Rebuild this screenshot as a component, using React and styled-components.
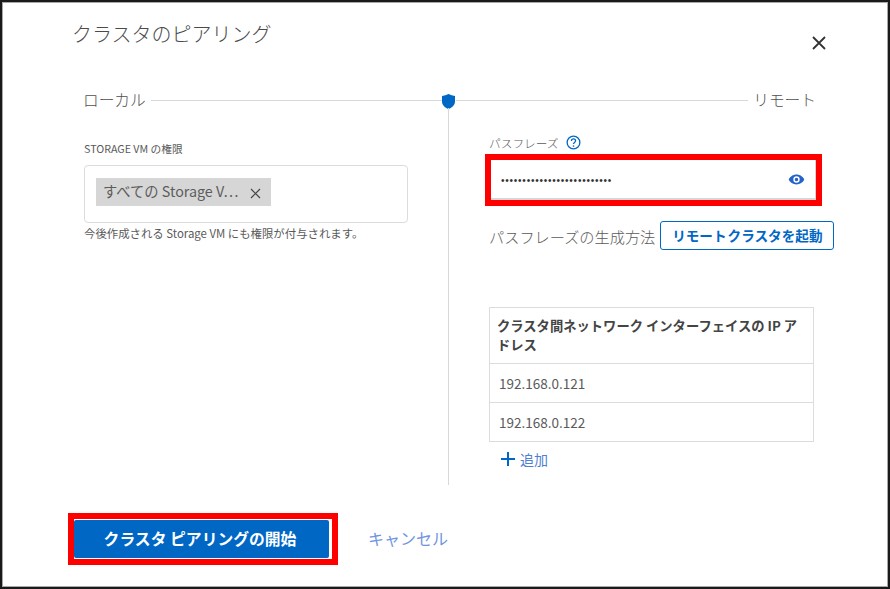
import React from 'react';
import styled, { createGlobalStyle } from 'styled-components';

const GlobalStyle = createGlobalStyle`
  html, body {
    margin: 0;
    padding: 0;
    background: #fff;
  }
  body {
    font-family: "Noto Sans CJK JP", "Noto Sans", sans-serif;
    color: #4f4f4f;
  }
`;

const Frame = styled.div`
  box-sizing: border-box;
  width: 890px;
  height: 589px;
  border: 2px solid #1a1a1a;
  box-shadow: inset 0 0 0 1px #a8a8a8;
  display: flex;
  flex-direction: column;
  background: #fff;
`;

const Header = styled.header`
  box-sizing: border-box;
  display: flex;
  justify-content: space-between;
  height: 80px;
  padding: 17px 61px 0 70px;
`;

const Title = styled.h2`
  margin: 0;
  font-size: 20px;
  line-height: 30px;
  font-weight: 300;
  color: #4a4a4a;
`;

const CloseButton = styled.button`
  margin-top: 16px;
  width: 16px;
  height: 16px;
  padding: 0;
  border: none;
  background: none;
  color: #333;
  display: flex;
`;

const Stepper = styled.div`
  display: flex;
  align-items: center;
  gap: 5px;
  height: 36px;
  padding: 0 72px 0 81px;
`;

const StepLabel = styled.span`
  font-size: 15.7px;
  line-height: 36px;
  font-weight: 300;
  color: #4f4f4f;
`;

const StepLine = styled.span`
  flex: 1;
  height: 1px;
  background: #d8d8d8;
`;

const ShieldMark = styled.svg`
  width: 13px;
  height: 15px;
  margin: 3px -4px 0 -6px;
  color: #0067c5;
`;

const Body = styled.div`
  display: grid;
  grid-template-columns: 446px 1fr;
  height: 367px;
`;

const LeftColumn = styled.section`
  padding: 23px 40px 0 82px;
`;

const RightColumn = styled.section`
  border-left: 1px solid #d8d8d8;
  margin-top: -10px;
  padding: 25px 0 0 40px;
`;

const FieldLabel = styled.div`
  font-size: 10.7px;
  line-height: 16px;
  color: #5a5a5a;
`;

const ChipBox = styled.div`
  box-sizing: border-box;
  height: 58px;
  margin-top: 8px;
  padding: 12px 11px;
  border: 1px solid #dcdcdc;
  border-radius: 4px;
`;

const Chip = styled.div`
  display: inline-flex;
  align-items: center;
  gap: 12px;
  box-sizing: border-box;
  width: 175px;
  height: 28px;
  padding: 0 7px 3px;
  background: #d6d6d6;
  font-size: 14.3px;
  color: #5c5c5c;
  white-space: nowrap;
`;

const ChipClose = styled.svg`
  width: 11px;
  height: 11px;
  margin-top: 5px;
  color: #444;
`;

const Hint = styled.p`
  margin: 2px 0 0;
  font-size: 11.4px;
  line-height: 16px;
  color: #5a5a5a;
`;

const PassLabelRow = styled.div`
  display: flex;
  align-items: center;
  gap: 7px;
  height: 18px;
`;

const PassLabel = styled.span`
  font-size: 11.7px;
  font-weight: 300;
  color: #5a5a5a;
`;

const Highlight = styled.div`
  box-sizing: border-box;
  border: 6px solid #f00;
  background: #fff;
  width: ${p => p.$width}px;
  height: ${p => p.$height}px;
`;

const PassHighlight = styled(Highlight)`
  margin: 3px 0 0 -4px;
`;

const PassField = styled.div`
  box-sizing: border-box;
  display: flex;
  align-items: center;
  justify-content: space-between;
  width: 325px;
  height: 40px;
  padding: 0 10px;
  border-right: 1px solid #d6d6d6;
  border-bottom: 2px solid #d6d6d6;
`;

const PassDots = styled.span`
  margin-top: 2px;
  font-family: "Liberation Sans", sans-serif;
  font-size: 10px;
  letter-spacing: 0.77px;
  color: #333;
`;

const GenerateRow = styled.div`
  display: flex;
  align-items: center;
  gap: 5px;
  margin-top: 15px;
`;

const GenerateText = styled.span`
  font-size: 15.2px;
  font-weight: 300;
  color: #5a5a5a;
  white-space: nowrap;
`;

const OutlineButton = styled.button`
  box-sizing: border-box;
  width: 174px;
  height: 29px;
  padding: 0 0 1px;
  border: 1px solid #0067c5;
  border-radius: 3px;
  background: #fff;
  font: 700 13.6px "Noto Sans CJK JP", sans-serif;
  word-spacing: -2px;
  color: #0067c5;
  white-space: nowrap;
`;

const AddressTable = styled.div`
  width: 325px;
  margin-top: 57px;
  border: 1px solid #dcdcdc;
  box-sizing: border-box;
`;

const AddressHead = styled.div`
  box-sizing: border-box;
  height: 55px;
  padding: 8px 7px 0;
  font-size: 13.3px;
  font-weight: 700;
  line-height: 19px;
  color: #444;
`;

const AddressRow = styled.div`
  box-sizing: border-box;
  height: 39px;
  padding: 0 9px 1px;
  display: flex;
  align-items: center;
  border-top: 1px solid #dcdcdc;
  font-size: 13.5px;
  color: #5a5a5a;
`;

const AddLink = styled.a`
  display: inline-flex;
  align-items: center;
  gap: 5px;
  margin: 6px 0 0 12px;
  font-size: 14px;
  line-height: 22px;
  color: #4f7fd0;
`;

const Footer = styled.footer`
  display: flex;
  align-items: center;
  gap: 30px;
  padding: 0 0 0 66px;
  margin-top: 28px;
`;

const PrimaryHighlight = styled(Highlight)`
  padding: 1px 3px 1px 0;
`;

const PrimaryButton = styled.button`
  display: block;
  width: 100%;
  height: 100%;
  padding: 0 3px 2px 0;
  border: none;
  border-radius: 2px;
  background: #0067c5;
  color: #fff;
  font: 700 15.8px "Noto Sans CJK JP", sans-serif;
`;

const CancelLink = styled.a`
  margin-top: -2px;
  font-size: 16px;
  font-weight: 400;
  color: #7094e2;
`;

const App = () => {
  return (
    <>
      <GlobalStyle />
      <Frame>
        <Header>
          <Title>クラスタのピアリング</Title>
          <CloseButton aria-label="閉じる">
            <svg viewBox="0 0 16 16" width="16" height="16" fill="none" stroke="currentColor" strokeWidth="1.8">
              <path d="M2 2l12 12M14 2L2 14" />
            </svg>
          </CloseButton>
        </Header>
        <Stepper>
          <StepLabel>ローカル</StepLabel>
          <StepLine />
          <ShieldMark viewBox="0 0 13 15">
            <path fill="currentColor" d="M0 2Q3.500 1.500 6.500 0 9.500 1.500 13 2v5.500c0 3.700-2.800 6-6.500 7.500C2.800 13.500 0 11.200 0 7.500z" />
          </ShieldMark>
          <StepLine />
          <StepLabel>リモート</StepLabel>
        </Stepper>
        <Body>
          <LeftColumn>
            <FieldLabel>STORAGE VM の権限</FieldLabel>
            <ChipBox>
              <Chip>
                すべての Storage V…
                <ChipClose viewBox="0 0 11 11" fill="none" stroke="currentColor" strokeWidth="1.2">
                  <path d="M1 1l9 9M10 1l-9 9" />
                </ChipClose>
              </Chip>
            </ChipBox>
            <Hint>今後作成される Storage VM にも権限が付与されます。</Hint>
          </LeftColumn>
          <RightColumn>
            <PassLabelRow>
              <PassLabel>パスフレーズ</PassLabel>
              <svg viewBox="0 0 16 16" width="15" height="15" fill="none" stroke="#0067c5">
                <circle cx="8" cy="8" r="6.8" strokeWidth="1.4" />
                <path d="M5.800 6.300c0-1.300 1-2.100 2.200-2.100s2.200.8 2.200 2c0 1.800-2.200 1.700-2.200 3.500" strokeWidth="1.4" />
                <circle cx="8" cy="11.700" r=".9" fill="#0067c5" stroke="none" />
              </svg>
            </PassLabelRow>
            <PassHighlight $width={337} $height={52}>
              <PassField>
                <PassDots>••••••••••••••••••••••••••</PassDots>
                <svg viewBox="0 0 24 24" width="17" height="17" fill="#2563c9">
                  <path d="M12 5C7 5 2.700 8.100 1 12c1.700 3.900 6 7 11 7s9.300-3.100 11-7c-1.700-3.900-6-7-11-7zm0 11.500a4.500 4.500 0 1 1 0-9 4.500 4.500 0 0 1 0 9zm0-7a2.500 2.500 0 1 0 0 5 2.500 2.500 0 0 0 0-5z" />
                </svg>
              </PassField>
            </PassHighlight>
            <GenerateRow>
              <GenerateText>パスフレーズの生成方法</GenerateText>
              <OutlineButton>リモート クラスタを起動</OutlineButton>
            </GenerateRow>
            <AddressTable>
              <AddressHead>クラスタ間ネットワーク インターフェイスの IP アドレス</AddressHead>
              <AddressRow>192.168.0.121</AddressRow>
              <AddressRow>192.168.0.122</AddressRow>
            </AddressTable>
            <AddLink>
              <svg viewBox="0 0 14 14" width="14" height="14" stroke="#0067c5" strokeWidth="2">
                <path d="M7 0v14M0 7h14" />
              </svg>
              追加
            </AddLink>
          </RightColumn>
        </Body>
        <Footer>
          <PrimaryHighlight $width={270} $height={52}>
            <PrimaryButton>クラスタ ピアリングの開始</PrimaryButton>
          </PrimaryHighlight>
          <CancelLink>キャンセル</CancelLink>
        </Footer>
      </Frame>
    </>
  );
};

export default App;
